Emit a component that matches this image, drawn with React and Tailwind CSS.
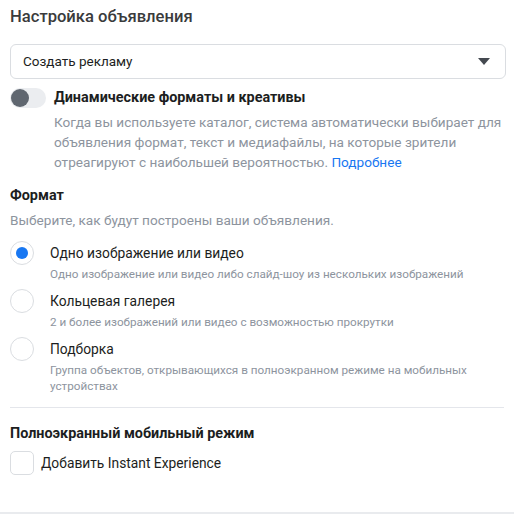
import { useState } from 'react'

const formats = [
  {
    id: 'single',
    title: 'Одно изображение или видео',
    desc: 'Одно изображение или видео либо слайд-шоу из нескольких изображений',
  },
  {
    id: 'carousel',
    title: 'Кольцевая галерея',
    desc: '2 и более изображений или видео с возможностью прокрутки',
  },
  {
    id: 'collection',
    title: 'Подборка',
    desc: 'Группа объектов, открывающихся в полноэкранном режиме на мобильных устройствах',
  },
]

export default function App() {
  const [format, setFormat] = useState('single')
  const [dynamic, setDynamic] = useState(false)
  const [instant, setInstant] = useState(false)

  return (
    <div className="w-[514px] h-[514px] bg-white font-['Roboto',sans-serif] text-[#1c1e21] overflow-hidden flex flex-col">
      <div className="flex-1 px-[10px]">
        {/* Заголовок */}
        <h1 className="pt-[6px] text-[16.6px] leading-[22px] font-medium text-[#3a3b3c]">Настройка объявления</h1>

        {/* Выпадающий список */}
        <button className="mt-[16px] w-[496px] h-[35px] border border-[#dadde1] rounded-[6px] flex items-center justify-between pl-[12px] pr-[15px] text-[13.5px] text-[#1c1e21]">
          <span>Создать рекламу</span>
          <svg width="12" height="7" viewBox="0 0 12 7">
            <path d="M0 0h12L6 7z" fill="#444950" />
          </svg>
        </button>

        {/* Переключатель */}
        <div className="mt-[9px] flex items-start">
          <button
            onClick={() => setDynamic(!dynamic)}
            className="w-[36px] h-[20px] rounded-full bg-[#ebedf0] flex items-center pl-[1px] shrink-0"
          >
            <span className="w-[18px] h-[18px] rounded-full bg-[#606770]" />
          </button>
          <div className="ml-[8px] w-[452px]">
            <div className="text-[14.4px] leading-[20px] font-bold text-[#1c1e21]">Динамические форматы и креативы</div>
            <p className="mt-[4px] text-[13.6px] leading-[20px] text-[#8d949e]">
              Когда вы используете каталог, система автоматически выбирает для объявления формат, текст и медиафайлы, на которые зрители отреагируют с наибольшей вероятностью. <span className="text-[#1877f2]">Подробнее</span>
            </p>
          </div>
        </div>

        {/* Формат */}
        <h2 className="mt-[14px] text-[14.4px] leading-[20px] font-bold text-[#1c1e21]">Формат</h2>
        <p className="mt-[4px] text-[13.6px] leading-[20px] text-[#8d949e]">Выберите, как будут построены ваши объявления.</p>

        <div className="mt-[11px] flex flex-col gap-[7px]">
          {formats.map((f) => (
            <div key={f.id} className="flex items-start cursor-pointer" onClick={() => setFormat(f.id)}>
              <span className="w-[24px] h-[24px] rounded-full border border-[#dadde1] flex items-center justify-center shrink-0">
                {format === f.id && <span className="w-[12px] h-[12px] rounded-full bg-[#1877f2]" />}
              </span>
              <div className="ml-[16px] w-[430px]">
                <div className="text-[13.8px] leading-[24px] text-[#1c1e21]">{f.title}</div>
                <div className="mt-[1px] text-[11.7px] leading-[16px] text-[#8d949e]">{f.desc}</div>
              </div>
            </div>
          ))}
        </div>

        <div className="mt-[13px] h-px bg-[#e4e6eb]" />

        {/* Полноэкранный режим */}
        <h2 className="mt-[16px] text-[14.4px] leading-[20px] font-bold text-[#1c1e21]">Полноэкранный мобильный режим</h2>
        <label className="mt-[7px] flex items-center cursor-pointer" onClick={() => setInstant(!instant)}>
          <span className="w-[24px] h-[24px] rounded-[5px] border border-[#dadde1] shrink-0" />
          <span className="ml-[7px] text-[13.8px] leading-[20px] text-[#1c1e21]">Добавить Instant Experience</span>
        </label>
      </div>
      <div className="h-[2px] bg-[#e9ebee]" />
    </div>
  )
}
